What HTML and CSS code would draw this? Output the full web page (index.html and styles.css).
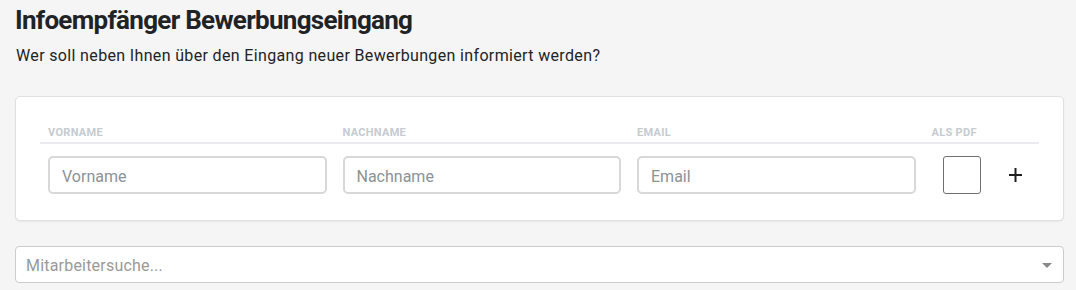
FILE: index.html
```html
<!DOCTYPE html>
<html lang="de">
<head>
  <meta charset="UTF-8" />
  <meta name="viewport" content="width=device-width, initial-scale=1" />
  <title>Infoempfänger Bewerbungseingang</title>
  <link rel="stylesheet" href="styles.css">
</head>
<body>

<div class="page">
  <h1 class="title">Infoempfänger Bewerbungseingang</h1>
  <p class="lead">Wer soll neben Ihnen über den Eingang neuer Bewerbungen informiert werden?</p>

  <div class="card">
    <div class="recipients">
      <div class="row head">
        <div class="cell">Vorname</div>
        <div class="cell">Nachname</div>
        <div class="cell">Email</div>
        <div class="cell">Als PDF</div>
      </div>
      <div class="row body">
        <div class="cell"><input type="text" placeholder="Vorname" /></div>
        <div class="cell"><input type="text" placeholder="Nachname" /></div>
        <div class="cell"><input type="text" placeholder="Email" /></div>
        <div class="cell pdf">
          <span class="check"></span>
          <button class="add" title="Hinzufügen">
            <svg width="13" height="14" viewBox="0 0 13 14"><path d="M6.5 0v14M0 7h13" stroke="#1e1e1e" stroke-width="2" fill="none"/></svg>
          </button>
        </div>
      </div>
    </div>
  </div>

  <div class="select">
    <span class="placeholder">Mitarbeitersuche...</span>
    <span class="arrow"></span>
  </div>
</div>

</body>
</html>
```

FILE: styles.css
```css
* { box-sizing: border-box; }
body, html {
  margin: 0; padding: 0; background: #f5f5f5;
  font-family: Roboto, "Noto Sans", sans-serif; color: #1f2326;
}
.page {
  padding: 4px 12px 0 15px;
}
.title {
  margin: 0;
  font-size: 26px;
  line-height: 32px;
  font-weight: 700;
  letter-spacing: -0.7px;
}
.lead {
  margin: 10px 0 0 1px;
  font-size: 16px;
  line-height: 20px;
  letter-spacing: 0.35px;
}
.card {
  margin-top: 30px;
  background: #fff;
  border: 1px solid #e0e0e0;
  border-radius: 5px;
  box-shadow: 0 1px 2px rgba(0,0,0,0.06);
  padding: 24px 24px 26px 24px;
}
.row {
  display: grid;
  grid-template-columns: 294.5px 294.5px 294.5px 1fr;
}
.row .cell {
  padding: 0 8px;
}
.head {
  border-bottom: 2px solid #e9ebee;
  padding: 5px 0 3px;
  font-size: 11px;
  line-height: 13px;
  font-weight: 700;
  text-transform: uppercase;
  color: #c5cbd1;
  letter-spacing: 0.3px;
}
.body {
  padding-top: 12px;
}
.body input {
  width: 100%;
  height: 38px;
  border: 2px solid #d8d8d8;
  border-radius: 5px;
  padding: 3px 12px 0;
  font-family: inherit;
  font-size: 16px;
  color: #333;
  background: #fff;
}
.body input::placeholder {
  color: #8b9298;
}
.pdf {
  display: flex;
  align-items: center;
}
.check {
  width: 38px;
  height: 38px;
  margin-left: 11px;
  border: 1px solid #707070;
  border-radius: 3px;
  background: #fff;
}
.add {
  margin-left: 28px;
  padding: 0;
  border: 0;
  background: none;
  cursor: pointer;
  display: flex;
}
.select {
  margin-top: 25px;
  height: 37px;
  background: #fff;
  border: 1px solid #cccccc;
  border-radius: 4px;
  display: flex;
  align-items: center;
  justify-content: space-between;
  padding: 2px 11px 0 10px;
}
.placeholder {
  font-size: 16px;
  letter-spacing: 0.2px;
  color: #999;
}
.arrow {
  width: 0;
  height: 0;
  border-left: 5px solid transparent;
  border-right: 5px solid transparent;
  border-top: 5px solid #888;
}
```
